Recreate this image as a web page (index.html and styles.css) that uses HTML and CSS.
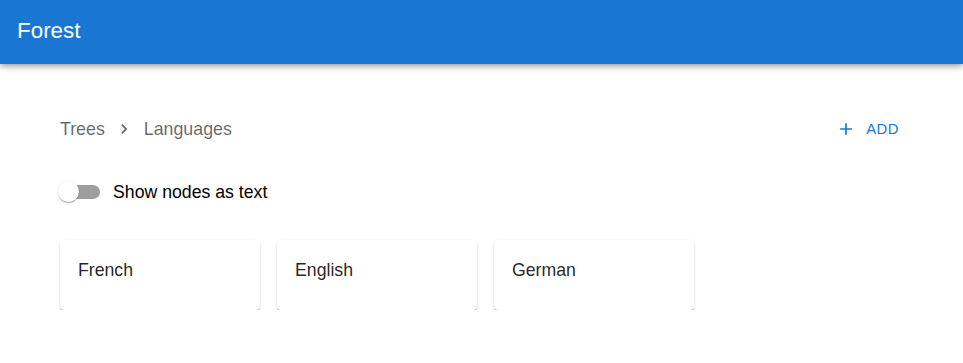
FILE: index.html
```html
<!DOCTYPE html>
<html lang="en">
<head>
  <meta charset="UTF-8" />
  <meta name="viewport" content="width=device-width, initial-scale=1.0" />
  <title>Forest</title>
  <link rel="stylesheet" href="styles.css">
</head>
<body>
  <header class="app-bar">
    <div class="app-title">Forest</div>
  </header>

  <main class="content">
    <div class="top-row">
      <nav class="crumbs">
        <span class="crumb">Trees</span>
        <svg class="crumb-sep" viewBox="0 0 24 24" width="20" height="20"><path d="M10 6 8.59 7.41 13.17 12l-4.58 4.59L10 18l6-6z" fill="currentColor"/></svg>
        <span class="crumb">Languages</span>
      </nav>
      <button class="add-button">
        <svg viewBox="0 0 24 24" width="20" height="20"><path d="M19 13h-6v6h-2v-6H5v-2h6V5h2v6h6v2z" fill="currentColor"/></svg>
        <span>Add</span>
      </button>
    </div>

    <label class="toggle-row">
      <span class="switch">
        <span class="switch-track"></span>
        <span class="switch-thumb"></span>
      </span>
      <span class="toggle-label">Show nodes as text</span>
    </label>

    <div class="cards">
      <div class="card">French</div>
      <div class="card">English</div>
      <div class="card">German</div>
    </div>
  </main>
</body>
</html>
```

FILE: styles.css
```css
body {
  margin: 0;
  font-family: 'Liberation Sans', Arial, sans-serif;
  background: #fff;
  color: rgba(0, 0, 0, 0.87);
}
.app-bar {
  height: 64px;
  background: #1976d2;
  color: #fff;
  display: flex;
  align-items: center;
  padding: 0 17px;
  box-shadow: 0 2px 4px -1px rgba(0,0,0,0.2), 0 4px 5px 0 rgba(0,0,0,0.14), 0 1px 10px 0 rgba(0,0,0,0.12);
}
.app-title {
  font-size: 22.4px;
  margin-top: -2px;
}
.content {
  padding: 0 60px;
}
.top-row {
  display: flex;
  align-items: center;
  justify-content: space-between;
  margin-top: 47px;
  height: 36px;
}
.crumbs {
  display: flex;
  align-items: center;
  font-size: 17.8px;
  color: rgba(0, 0, 0, 0.6);
}
.crumb-sep {
  margin: 0 10px 0 9px;
  color: rgba(0, 0, 0, 0.6);
}
.add-button {
  display: flex;
  align-items: center;
  gap: 10px;
  background: none;
  border: none;
  padding: 6px 4px 6px 8px;
  color: #1976d2;
  font-family: 'Liberation Sans', Arial, sans-serif;
  font-size: 14.8px;
  letter-spacing: 0.5px;
  text-transform: uppercase;
  cursor: pointer;
}
.toggle-row {
  display: flex;
  align-items: center;
  margin-top: 26px;
  height: 38px;
}
.switch {
  position: relative;
  width: 42px;
  height: 22px;
  margin-left: -2px;
  margin-right: 13px;
}
.switch-track {
  position: absolute;
  left: 4px;
  top: 4px;
  width: 38px;
  height: 14px;
  border-radius: 7px;
  background: #9e9e9e;
}
.switch-thumb {
  position: absolute;
  left: 0;
  top: 0;
  width: 21px;
  height: 21px;
  border-radius: 50%;
  background: #fff;
  box-shadow: 0 2px 1px -1px rgba(0,0,0,0.2), 0 1px 1px 0 rgba(0,0,0,0.14), 0 1px 3px 0 rgba(0,0,0,0.12);
}
.toggle-label {
  font-size: 17.7px;
  color: #000;
}
.cards {
  display: flex;
  gap: 17px;
  margin-top: 29px;
}
.card {
  width: 200px;
  height: 70px;
  box-sizing: border-box;
  padding: 20px 18px;
  font-size: 17.7px;
  color: rgba(0, 0, 0, 0.87);
  border-radius: 4px;
  background: #fff;
  box-shadow: 0 2px 1px -1px rgba(0,0,0,0.25), 0 1px 1px 0 rgba(0,0,0,0.16), 0 1px 3px 0 rgba(0,0,0,0.14);
}
```
